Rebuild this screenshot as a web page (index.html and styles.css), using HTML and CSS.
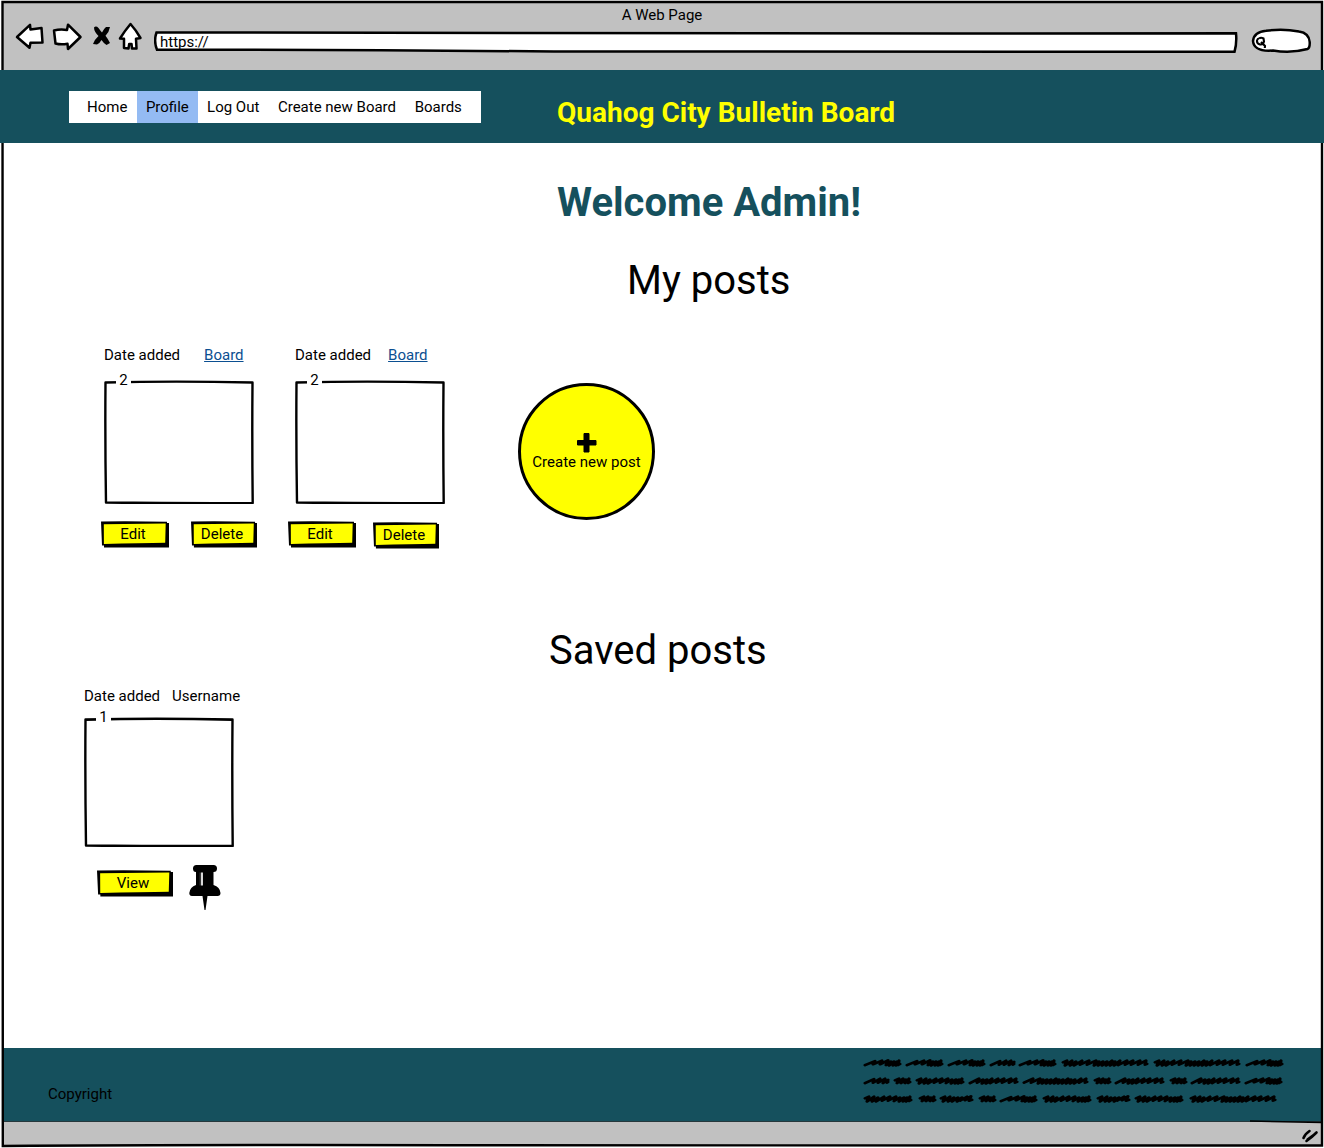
FILE: index.html
```html
<!DOCTYPE html>
<html lang="en">
<head>
<meta charset="utf-8">
<title>A Web Page</title>
<link rel="stylesheet" href="styles.css">
</head>
<body>
<div class="window">
  <div class="chrome">
    <div class="chrome-title">A Web Page</div>
    <div class="toolbar">
      <svg class="tool-icons" viewBox="0 0 130 32" width="130" height="32">
        <g fill="#fff" stroke="#000" stroke-width="2.5" stroke-linejoin="round">
          <path d="M2 16L15 3.800L15.500 8.500L26.500 7L27.500 21.500L15.500 21.700L14.500 26.800Z"/>
          <path d="M39 9.500Q45 8 52 9L53 3.700L65.500 16L53 28L52.500 22.800Q46 24 40.500 22.500Z"/>
          <path d="M115.500 3Q120.500 8.500 125.500 17L121 17.800L121.500 27.500L117 27.500L116.500 23L114.200 23L113.500 27.500L109 27L109 17.800L105 17.500Q110 9.500 115.500 3Z"/>
        </g>
        <path fill="#000" transform="translate(0 .5)" d="M79 6Q81 4 83.500 6.500Q86 10 87 11Q89 7 91 5.500L95 5.500Q94 11 90.500 14.300Q93 17.500 95 21.500L91.500 23.500Q88 21 86.500 18.500Q84.500 22 82 23L78 22.500Q80 17.500 83.500 14.500Q79 10 79 6Z"/>
      </svg>
      <div class="url">
        <svg class="sketch" viewBox="0 0 1084 24" preserveAspectRatio="none"><path d="M2.500 1.500Q500 .8 800 2.500L1082 2.300Q1083 12 1080.500 20.800Q600 21.500 400 20.500Q200 18.700 3 18.700Q-.5 10 2.500 1.500Z" fill="#fff" stroke="#000" stroke-width="2.500"/></svg>
        <span>https://</span>
      </div>
      <svg class="search" viewBox="0 0 60 26" width="60" height="26">
        <path d="M2 13Q3 4 15 2.800Q32 .5 48 3.500Q58 5 58.700 14Q59 20 56.500 21Q40 25.500 22 22.500Q3 24 2 13Z" fill="#fff" stroke="#000" stroke-width="2.500"/>
        <path d="M8 10.500Q10 9 12.500 10.500L13 13.500Q12 17 9 16.500Q5.500 15.500 6 12.500Q6.500 10.500 8 10.500M10 14L14 18L13.800 20" fill="none" stroke="#000" stroke-width="2.100"/>
      </svg>
    </div>
  </div>

  <header class="site-header">
    <nav class="menu">
      <a>Home</a><a class="active">Profile</a><a>Log Out</a><a>Create new Board</a><a>Boards</a>
    </nav>
    <div class="brand">Quahog City Bulletin Board</div>
  </header>

  <main>
    <h1 class="welcome">Welcome Admin!</h1>
    <h2 class="my-title">My posts</h2>
    <section class="posts">
      <article class="post first">
        <div class="meta"><span>Date added</span><a class="board">Board</a></div>
        <div class="box">
          <svg class="sketch" viewBox="0 0 150 124" preserveAspectRatio="none"><use href="#box"/></svg>
          <span class="count">2</span>
        </div>
        <div class="actions">
          <div class="btn"><svg class="sketch" viewBox="0 0 68 27" preserveAspectRatio="none"><use href="#btn"/></svg><span>Edit</span></div>
          <div class="btn delete"><svg class="sketch" viewBox="0 0 68 27" preserveAspectRatio="none"><use href="#btn"/></svg><span>Delete</span></div>
        </div>
      </article>
      <article class="post second">
        <div class="meta"><span>Date added</span><a class="board">Board</a></div>
        <div class="box">
          <svg class="sketch" viewBox="0 0 150 124" preserveAspectRatio="none"><use href="#box"/></svg>
          <span class="count">2</span>
        </div>
        <div class="actions">
          <div class="btn"><svg class="sketch" viewBox="0 0 68 27" preserveAspectRatio="none"><use href="#btn"/></svg><span>Edit</span></div>
          <div class="btn delete"><svg class="sketch" viewBox="0 0 68 27" preserveAspectRatio="none"><use href="#btn"/></svg><span>Delete</span></div>
        </div>
      </article>
      <div class="create">
        <svg viewBox="0 0 20 20" width="20" height="20"><path d="M7 .5h5v7h7v4.500h-7v7h-5v-7h-6.500v-4.500h6.500z" stroke="#000" stroke-linejoin="round"/></svg>
        <span>Create new post</span>
      </div>
    </section>

    <h2 class="saved-title">Saved posts</h2>
    <article class="post saved">
      <div class="meta"><span>Date added</span><span>Username</span></div>
      <div class="box">
        <svg class="sketch" viewBox="0 0 150 124" preserveAspectRatio="none"><use href="#box"/></svg>
        <span class="count">1</span>
      </div>
      <div class="actions">
        <div class="btn view"><svg class="sketch" viewBox="0 0 68 27" preserveAspectRatio="none"><use href="#btn"/></svg><span>View</span></div>
        <svg class="pin" viewBox="0 0 32 46" width="32" height="46">
          <path d="M7.500 0H24.500Q28 0 28 3.500Q28 7 24.500 7V20Q31 22 31.500 28Q31.500 31 28.500 31H18.500L16.500 45H15.500L13.500 31H3Q.3 31 .3 28Q1 22 7 20V7Q4 7 4 3.500Q4 0 7.500 0Z"/>
          <path d="M13 7.500V20.500" stroke="#fff" stroke-width="1.700"/>
          <path d="M11.200 7.500V20.500" stroke="#777" stroke-width=".6"/>
        </svg>
      </div>
    </article>
  </main>

  <footer class="site-footer">
    <span>Copyright</span>
    <svg viewBox="0 0 422 50" width="422" height="50">
      <defs>
        <g transform="scale(1 .8)" id="w16"><path d="M1 0L5-2L3 3.500L9-2L7 3.500L12-1L11 3.500L15-2L14 3.500L16 2"/></g>
        <g transform="scale(1 .8)" id="w24"><path d="M0 3.500L9-1.500L8 3L15-2L13 3L20-2L18 3.500L23-.5L22 3L23 2"/></g>
        <g transform="scale(1 .8)" id="w34"><path d="M1 0L5-2L3 4L10-2L8 4L14-1L12 4L18-1L17 4L22-1L20 3L27-2L25 2.500L31-2.500L29 3L32 2"/></g>
        <g transform="scale(1 .8)" id="w36"><path d="M0 3.500L10-1.500L8 2.500L17-2L15 2.500L23-2.500L21 3.500L26-1L24 4L29-1L28 4L32-1L31 4L34-2L33 3.500L35 2"/></g>
        <g transform="scale(1 .8)" id="w48"><path d="M1 0L5-2L3 4L10-2L8 4L14-1L12 4L20-2L18 3L26-2L24 3L32-2L30 3.500L36-1L35 4L40-1L39 4L43-1L42 4L46-2L45 3.500L47 2"/></g>
        <g transform="scale(1 .8)" id="w49"><path d="M0 3.500L9-2L7 3L13-1L12 4L17-1L16 4L22-2L20 3.500L28-2L26 3L34-2L32 3L41-2L39 3L46-2L45 3L47 2"/></g>
        <g transform="scale(1 .8)" id="w64"><path d="M0 3L9-2L7 3L16-2L14 4L19-1L18 4L23-1L22 4L27-1L26 4L32-2L30 4L35-1L34 4L39-1L38 4L44-2L42 4L47-1L46 4L51-1L50 4L57-2L55 3L62-2L61 3L63 2"/></g>
        <g transform="scale(1 .8)" id="w87"><path d="M1 0L5-2L3 4L10-2L8 4L14-1L12 4L20-2L18 3L27-2L25 3L34-2L32 4L37-1L36 4L41-1L40 4L45-1L44 4L50-2L48 4L53-1L52 4L58-2L56 3.500L65-2L63 3L71-2L69 3L78-2L76 3L84-2L83 3L85 2"/></g>
      </defs>
      <g fill="none" stroke="#000" stroke-width="3.200" stroke-linecap="round" stroke-linejoin="round" transform="translate(0 -.7)">
        <use href="#w36" x="3" y="9"/><use href="#w36" x="45" y="9"/><use href="#w36" x="87" y="9"/><use href="#w24" x="129" y="9"/><use href="#w36" x="158" y="9"/><use href="#w87" x="200" y="9"/><use href="#w87" x="292" y="9"/><use href="#w36" x="385" y="9"/>
        <use href="#w24" x="3" y="27"/><use href="#w16" x="32" y="27"/><use href="#w48" x="54" y="27"/><use href="#w49" x="108" y="27"/><use href="#w64" x="162" y="27"/><use href="#w16" x="232" y="27"/><use href="#w49" x="254" y="27"/><use href="#w16" x="308" y="27"/><use href="#w49" x="330" y="27"/><use href="#w36" x="384" y="27"/>
        <use href="#w48" x="2" y="45"/><use href="#w16" x="57" y="45"/><use href="#w34" x="78" y="45"/><use href="#w16" x="117" y="45"/><use href="#w36" x="139" y="45"/><use href="#w48" x="181" y="45"/><use href="#w34" x="235" y="45"/><use href="#w48" x="273" y="45"/><use href="#w87" x="328" y="45"/>
      </g>
    </svg>
  </footer>

  <div class="status">
    <svg viewBox="0 0 18 14" width="18" height="14"><path d="M2.500 9Q4 5 8.500 2M5.500 12Q10 9 15.500 3.500M6.500 10.500L14 5" fill="none" stroke="#000" stroke-width="2.600" stroke-linecap="round"/></svg>
  </div>

  <svg class="frame" viewBox="0 0 1324 1148" width="1324" height="1148">
    <path d="M2.800 2Q600 3 1322 2Q1321 550 1322 1145.500Q900 1144 500 1145.300Q200 1144.500 2.800 1146Q4 600 2.500 2Z" fill="none" stroke="#000" stroke-width="2.400"/>
    <path d="M1250 1121L1322 1122.500" stroke="#000" stroke-width="1.500"/>
  </svg>
</div>

<svg class="library" width="0" height="0">
  <defs>
    <path id="box" d="M1.500 2.500Q70 .7 148.500 2.500Q148 60 148.700 123Q80 123.300 2 122.500Q1 60 1.500 2.500Z" fill="none" stroke="#000" stroke-width="2.400" stroke-linejoin="round"/>
    <g id="btn">
      <path d="M0 .5Q30 0 66 .8V2H68V26.500H3V24.500H1Z"/>
      <path d="M2.800 3.300L64.700 2.500L64.200 21.800Q40 22 2.900 23Z" fill="#ff0"/>
    </g>
  </defs>
</svg>
</body>
</html>
```

FILE: styles.css
```css
* { box-sizing: border-box; }

body {
  margin: 0;
  background: #fff;
  color: #000;
  font: 15px/18px Roboto, sans-serif;
}

.window {
  position: relative;
  display: flex;
  flex-direction: column;
  width: 1324px;
  height: 1148px;
  overflow: hidden;
}

.frame {
  position: absolute;
  inset: 0;
  pointer-events: none;
}

.library { display: block; }

.sketch {
  position: absolute;
  inset: 0;
  width: 100%;
  height: 100%;
}

.sketch + span { position: relative; }

/* Browser chrome */
.chrome {
  height: 71px;
  margin: 2px 2px -2px;
  padding-top: 4px;
  background: #c1c1c1;
}

.chrome-title { text-align: center; }

.toolbar {
  display: flex;
  align-items: flex-start;
  padding-left: 13px;
}

.tool-icons { margin-top: -3px; }

.url {
  position: relative;
  width: 1084px;
  height: 24px;
  margin: 7px 0 0 9px;
  padding: 2px 6px;
}

.search { margin: 4px 0 0 13px; }

/* Site header */
.site-header {
  position: relative;
  z-index: 1;
  display: flex;
  align-items: flex-start;
  flex: none;
  height: 73px;
  padding: 21px 0 0 69px;
  margin-top: -1px;
  background: #15505d;
}

.menu {
  display: flex;
  width: 412px;
  height: 32px;
  padding-left: 9px;
  background: #fff;
}

.menu a { padding: 7px 9.300px; }
.menu a:first-child { padding: 7px 9.500px 7px 9px; }
.menu .active { padding: 7px 9px; background: #94bbf3; }

.brand {
  margin: 5px 0 0 76px;
  color: #ff0;
  font-size: 28px;
  font-weight: 700;
  line-height: 34px;
  white-space: nowrap;
}

/* Content */
main {
  flex: none;
  height: 905px;
  padding-top: 36px;
}

h1, h2 {
  margin: 0;
  font-size: 40px;
  line-height: 48px;
  font-weight: 400;
}

.welcome {
  padding-left: 557px;
  color: #15505d;
  font-weight: 700;
}

.my-title { padding: 30px 0 0 627px; }

.posts {
  display: flex;
  height: 310px;
  padding: 41px 0 0 101px;
}

.post { width: 156px; }
.second { margin-left: 31px; }

.meta {
  display: flex;
  gap: 24px;
  padding-left: 3px;
  white-space: nowrap;
}

.second .meta { gap: 17px; padding-left: 7px; }

.board { color: #0b4f91; text-decoration: underline; }

.box {
  position: relative;
  width: 150px;
  height: 124px;
  margin: 16px 0 0 3px;
}

.second .box { margin-left: 7px; }

.count {
  display: block;
  width: 15px;
  height: 18px;
  margin-left: 12px;
  top: -9px;
  background: #fff;
  text-align: center;
}

.actions {
  display: flex;
  align-items: flex-start;
  gap: 22px;
  margin-top: 17px;
}

.second .actions { gap: 17px; }

.btn {
  position: relative;
  width: 68px;
  height: 27px;
  padding: 4px 4px 0 0;
  text-align: center;
}

.delete { width: 66px; }
.second .delete { margin-top: 1px; }

.create {
  display: flex;
  flex-direction: column;
  align-items: center;
  width: 137px;
  height: 137px;
  margin: 37px 0 0 74px;
  padding-top: 47px;
  border: 3px solid #000;
  border-radius: 50%;
  background: #ff0;
}

.saved-title { height: 60px; padding: 12px 0 0 549px; }
.saved { margin: 12px 0 0 81px; }
.saved .meta { gap: 12px; }
.saved .box { height: 130px; margin-top: 12px; }
.saved .actions { padding-left: 16px; gap: 16px; }
.saved .btn { margin-top: 6px; }
.view { width: 76px; }
.pin { margin-top: 1px; }

/* Footer */
.site-footer {
  position: relative;
  display: flex;
  flex: none;
  align-items: flex-start;
  justify-content: space-between;
  height: 73px;
  margin: 0 2px;
  padding: 6px 38px 0 46px;
  background: #15505d;
}

.site-footer span { padding-top: 31px; }

.status {
  display: flex;
  justify-content: flex-end;
  flex: none;
  height: 25px;
  margin: 0 2px;
  padding: 7px 3px 0 0;
  border-top: 1px solid #26383c;
  background: #c1c1c1;
}
```
